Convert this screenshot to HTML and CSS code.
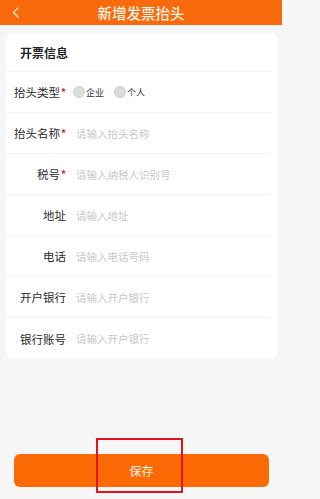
FILE: index.html
```html
<!DOCTYPE html>
<html lang="zh-CN">
<head>
<meta charset="utf-8">
<title>新增发票抬头</title>
<link rel="stylesheet" href="styles.css">
</head>
<body>
<div class="page">
  <header class="topbar">
    <svg class="back" width="10" height="11" viewBox="0 0 10 11"><polyline points="7,1 2.5,5.5 7,10" fill="none" stroke="#ffe6cc" stroke-width="1.4" stroke-linecap="round" stroke-linejoin="round"/></svg>
    <h1 class="title">新增发票抬头</h1>
  </header>

  <section class="card">
    <div class="card-head">开票信息</div>
    <div class="row">
      <div class="label">抬头类型<span class="req">*</span></div>
      <div class="radios">
        <span class="radio"><i class="dot"></i>企业</span>
        <span class="radio"><i class="dot"></i>个人</span>
      </div>
    </div>
    <div class="row">
      <div class="label">抬头名称<span class="req">*</span></div>
      <div class="ph">请输入抬头名称</div>
    </div>
    <div class="row">
      <div class="label">税号<span class="req">*</span></div>
      <div class="ph">请输入纳税人识别号</div>
    </div>
    <div class="row">
      <div class="label">地址</div>
      <div class="ph">请输入地址</div>
    </div>
    <div class="row">
      <div class="label">电话</div>
      <div class="ph">请输入电话号码</div>
    </div>
    <div class="row">
      <div class="label">开户银行</div>
      <div class="ph">请输入开户银行</div>
    </div>
    <div class="row last">
      <div class="label">银行账号</div>
      <div class="ph">请输入开户银行</div>
    </div>
  </section>

  <div class="footer">
    <button class="save">保存</button>
  </div>
  <div class="mark"></div>
</div>
</body>
</html>
```

FILE: styles.css
```css
* { box-sizing: border-box; }
html, body { margin: 0; padding: 0; background: #f6f6f6; }
body {
  font-family: "Noto Sans CJK SC", "Noto Sans", sans-serif;
  color: #333;
}
.page {
  position: relative;
  width: 282px;
  height: 499px;
  display: flex;
  flex-direction: column;
  overflow: hidden;
}
.topbar {
  height: 25px;
  background: #f86a0c;
  display: flex;
  align-items: center;
  justify-content: center;
  position: relative;
}
.back {
  position: absolute;
  left: 11px;
  top: 7px;
}
.title {
  margin: 0;
  font-size: 14.5px;
  font-weight: 500;
  color: #fff3e6;
  line-height: 25px;
}
.card {
  margin: 8px 4px 0 6px;
  background: #fff;
  border-radius: 8px;
  display: flex;
  flex-direction: column;
}
.card-head {
  height: 39px;
  margin-right: 7px;
  padding-left: 14px;
  display: flex;
  align-items: center;
  font-size: 12px;
  font-weight: 700;
  color: #222;
  border-bottom: 1px solid #f3f3f3;
}
.row {
  height: 41px;
  margin-right: 7px;
  display: flex;
  align-items: center;
  border-bottom: 1px solid #f3f3f3;
}
.row.last { border-bottom: none; }
.label {
  width: 60px;
  text-align: right;
  font-size: 11.5px;
  color: #2a2a2a;
  white-space: nowrap;
  flex: none;
}
.req {
  color: #d9262e;
  font-size: 10px;
  font-weight: 700;
  vertical-align: 1px;
  margin-left: 1px;
}
.ph {
  margin-left: 10px;
  font-size: 10.5px;
  color: #c8c8c8;
}
.radios {
  margin-left: 7px;
  display: flex;
  align-items: center;
  gap: 10px;
}
.radio {
  display: flex;
  align-items: center;
  font-size: 9px;
  color: #333;
}
.dot {
  width: 12px;
  height: 12px;
  border-radius: 50%;
  background: #dcdcdc;
  border: 1px solid #d0d0d0;
  margin-right: 1px;
}
.footer {
  margin-top: auto;
  padding: 0 13px 12px 14px;
}
.save {
  display: block;
  width: 100%;
  height: 33px;
  border: none;
  border-radius: 6px;
  background: #fc6a06;
  color: #fff1e0;
  font-family: inherit;
  font-size: 12px;
}
.mark {
  position: absolute;
  left: 96px;
  top: 438px;
  width: 87px;
  height: 55px;
  border: 2px solid #e0141c;
}
```
